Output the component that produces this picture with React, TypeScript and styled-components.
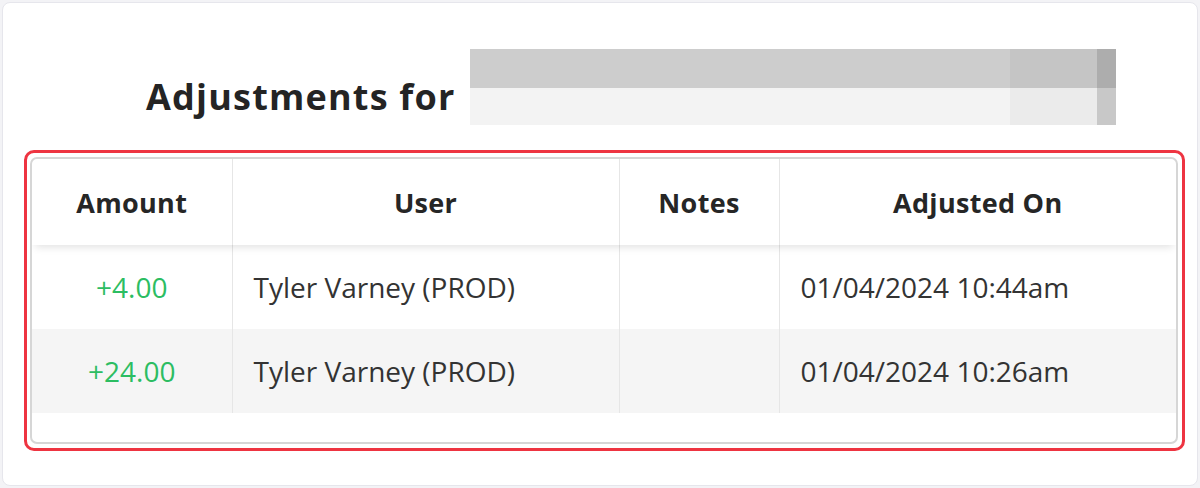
import React from "react";
import styled, { createGlobalStyle } from "styled-components";

const Global = createGlobalStyle`
  html, body { margin: 0; padding: 0; background: #f3f3f6; }
  body { font-family: "Open Sans", "Liberation Sans", sans-serif; }
  * { box-sizing: border-box; }
`;

const Page = styled.div`
  width: 1200px;
  height: 488px;
  padding: 2px;
`;

const Card = styled.div`
  height: 484px;
  background: #ffffff;
  border: 1px solid #e6e6ec;
  border-radius: 8px;
  display: flex;
  flex-direction: column;
`;

const HeadingRow = styled.div`
  display: flex;
  align-items: flex-end;
  margin-top: 46px;
  padding-left: 143px;
  height: 76px;
`;

const Heading = styled.h1`
  margin: 0 14px 6px 0;
  font-family: "Open Sans", "Liberation Sans", sans-serif;
  font-weight: 700;
  font-size: 36px;
  line-height: 44px;
  color: #242424;
  letter-spacing: 1.2px;
  white-space: nowrap;
`;

const Redacted = styled.div`
  display: grid;
  grid-template-columns: 540px 87px 19px;
  grid-template-rows: 39px 37px;
  width: 646px;
  height: 76px;
  flex-shrink: 0;
`;

const Patch = styled.div<{ $c: string }>`
  background: ${(p) => p.$c};
`;

const Highlight = styled.div`
  margin: 25px 12px 0 21px;
  border: 3px solid #ee3441;
  border-radius: 10px;
  padding: 4px 4px 4px 3px;
`;

const TableBox = styled.div`
  border: 2px solid #d6d6d6;
  border-radius: 7px;
  height: 287px;
  overflow: hidden;
  background: #fff;
`;

const Table = styled.table`
  width: 100%;
  border-collapse: collapse;
  table-layout: fixed;
`;

const HeadRow = styled.tr`
  box-shadow: 0 5px 8px -3px rgba(0, 0, 0, 0.12);
  position: relative;
`;

const Th = styled.th`
  height: 86px;
  font-family: "Open Sans", "Liberation Sans", sans-serif;
  font-weight: 700;
  font-size: 27px;
  letter-spacing: 0.3px;
  color: #262626;
  text-align: center;
  border-left: 1px solid #e6e6e6;
  &:first-child { border-left: none; }
`;

const BodyRow = styled.tr<{ $alt?: boolean }>`
  background: ${(p) => (p.$alt ? "#f5f5f5" : "#ffffff")};
`;

const Td = styled.td<{ $align?: string; $green?: boolean }>`
  height: 84px;
  font-size: 28px;
  color: ${(p) => (p.$green ? "#2cbd62" : "#333333")};
  text-align: ${(p) => p.$align || "left"};
  padding: 0 21px;
  border-left: 1px solid #e6e6e6;
  white-space: nowrap;
  &:first-child { border-left: none; }
`;

const rows = [
  { amount: "+4.00", user: "Tyler Varney (PROD)", notes: "", on: "01/04/2024 10:44am" },
  { amount: "+24.00", user: "Tyler Varney (PROD)", notes: "", on: "01/04/2024 10:26am" },
];

export default function App() {
  return (
    <>
      <Global />
      <Page>
        <Card>
          <HeadingRow>
            <Heading>Adjustments for</Heading>
            <Redacted>
              <Patch $c="#cdcdcd" />
              <Patch $c="#c5c5c5" />
              <Patch $c="#adadad" />
              <Patch $c="#f3f3f3" />
              <Patch $c="#ebebeb" />
              <Patch $c="#c8c8c8" />
            </Redacted>
          </HeadingRow>
          <Highlight>
            <TableBox>
              <Table>
                <colgroup>
                  <col style={{ width: 200 }} />
                  <col style={{ width: 387 }} />
                  <col style={{ width: 160 }} />
                  <col />
                </colgroup>
                <thead>
                  <HeadRow>
                    <Th>Amount</Th>
                    <Th>User</Th>
                    <Th>Notes</Th>
                    <Th>Adjusted On</Th>
                  </HeadRow>
                </thead>
                <tbody>
                  {rows.map((r, i) => (
                    <BodyRow key={i} $alt={i % 2 === 1}>
                      <Td $align="center" $green>{r.amount}</Td>
                      <Td>{r.user}</Td>
                      <Td>{r.notes}</Td>
                      <Td>{r.on}</Td>
                    </BodyRow>
                  ))}
                </tbody>
              </Table>
            </TableBox>
          </Highlight>
        </Card>
      </Page>
    </>
  );
}
